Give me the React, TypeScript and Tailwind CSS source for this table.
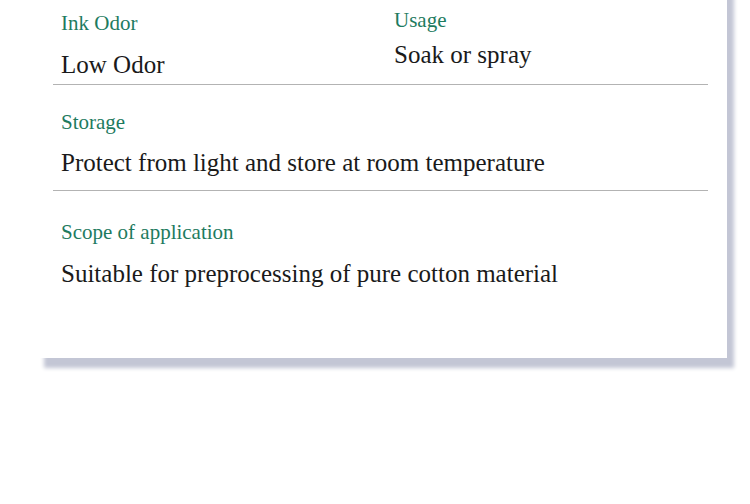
export default function App() {
  const serif = { fontFamily: '"Liberation Serif", "Times New Roman", serif' };
  return (
    <div className="w-[750px] h-[504px] bg-white overflow-hidden" style={serif}>
      <div className="-mt-6 ml-[37px] w-[690px] h-[382px] bg-white shadow-[7px_10px_4px_#c3c6d5] pt-6 pl-4 pr-[19px]">
        <div className="grid grid-cols-[333px_1fr] border-b border-[#b3b3b3] pb-[5px]">
          <div className="pl-2 pt-[11px]">
            <div className="text-[21px] leading-[24px] text-[#1e7b5f]">Ink Odor</div>
            <div className="mt-4 text-[25px] leading-[28px] text-[#1a1a1a]">Low Odor</div>
          </div>
          <div className="pl-2 pt-2">
            <div className="text-[21px] leading-[24px] text-[#1e7b5f]">Usage</div>
            <div className="mt-[9px] text-[25px] leading-[28px] text-[#1a1a1a]">Soak or spray</div>
          </div>
        </div>
        <div className="border-b border-[#b3b3b3] pl-2 pt-[25px] pb-[13px]">
          <div className="text-[21px] leading-[24px] text-[#1e7b5f]">Storage</div>
          <div className="mt-[15px] text-[25px] leading-[28px] text-[#1a1a1a]">Protect from light and store at room temperature</div>
        </div>
        <div className="pl-2 pt-[29px]">
          <div className="text-[21px] leading-[24px] text-[#1e7b5f]">Scope of application</div>
          <div className="mt-4 text-[25px] leading-[28px] text-[#1a1a1a]">Suitable for preprocessing of pure cotton material</div>
        </div>
      </div>
    </div>
  );
}
